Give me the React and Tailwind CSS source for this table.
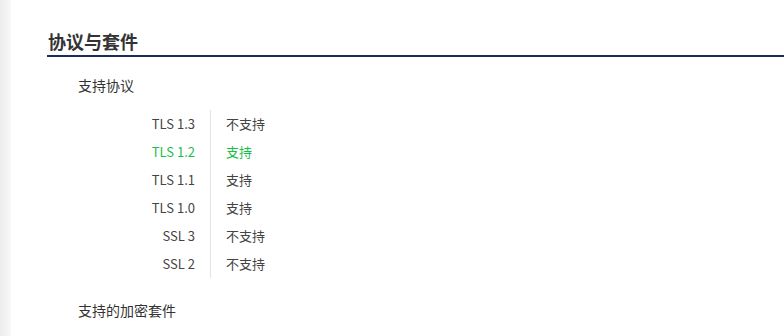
import React from 'react';

const protocols = [
    { name: 'TLS 1.3', supported: false },
    { name: 'TLS 1.2', supported: true, highlight: true },
    { name: 'TLS 1.1', supported: true },
    { name: 'TLS 1.0', supported: true },
    { name: 'SSL 3', supported: false },
    { name: 'SSL 2', supported: false },
];

const font = { fontFamily: '"Noto Sans CJK SC", "Noto Sans", sans-serif' };

const App = () => {
    return (
        <div className="flex w-[784px] h-[336px] bg-white overflow-hidden" style={font}>
            <div className="w-[11px] shrink-0 bg-gradient-to-r from-[#ececec] to-[#f8f8f8]" />
            <div className="flex-1 pl-[36px] pt-[29px]">
                <div className="border-b-2 border-[#1c2d5a] pb-[2px]">
                    <h2 className="text-[18px] leading-[24px] font-bold text-[#333] pl-[1px]">协议与套件</h2>
                </div>

                <div className="pl-[31px]">
                    <p className="mt-[18px] text-[14px] leading-[20px] text-[#333]">支持协议</p>

                    <div className="mt-[15px] flex">
                        <div className="w-[132px] flex flex-col items-end pr-[15px]">
                            {protocols.map((p) => (
                                <div
                                    key={p.name}
                                    className={`h-[28px] flex items-center text-[13px] ${p.highlight ? 'text-[#19be4b]' : 'text-[#444]'}`}
                                >
                                    {p.name}
                                </div>
                            ))}
                        </div>
                        <div className="w-px bg-[#e3e3e3]" />
                        <div className="flex flex-col pl-[15px]">
                            {protocols.map((p) => (
                                <div
                                    key={p.name}
                                    className={`h-[28px] flex items-center text-[13px] ${p.highlight ? 'text-[#19be4b]' : 'text-[#444]'}`}
                                >
                                    {p.supported ? '支持' : '不支持'}
                                </div>
                            ))}
                        </div>
                    </div>

                    <p className="mt-[22px] text-[14px] leading-[20px] text-[#333]">支持的加密套件</p>
                </div>
            </div>
        </div>
    );
};

export default App;
